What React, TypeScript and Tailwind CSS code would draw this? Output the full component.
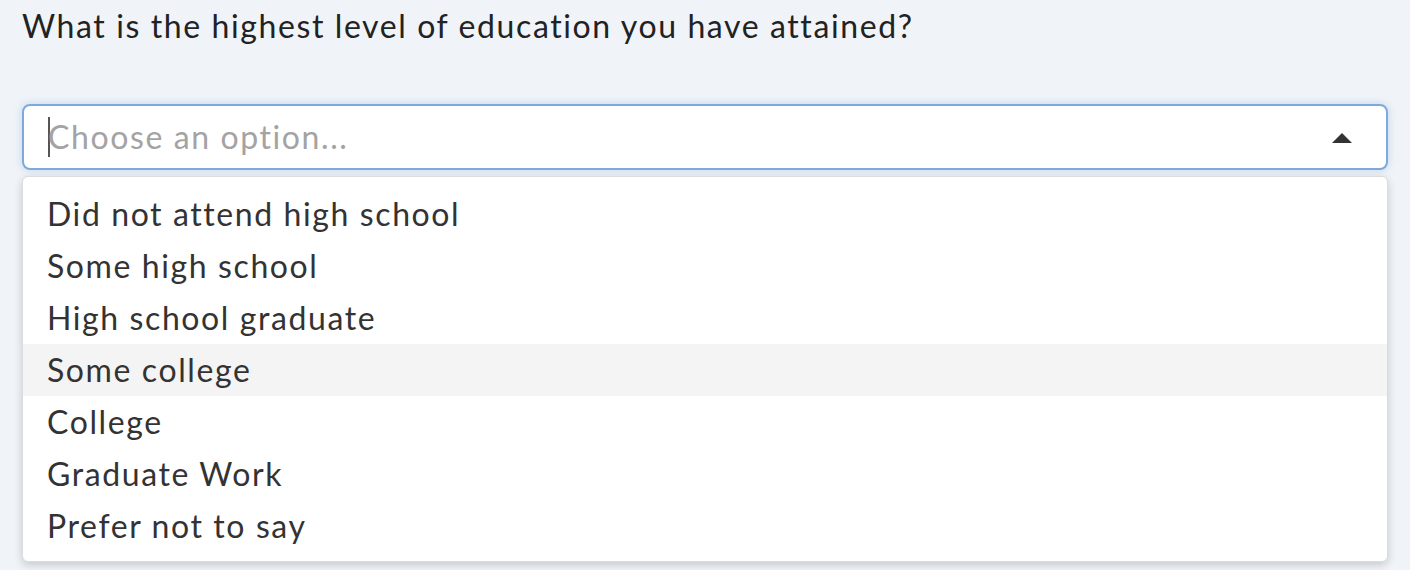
import React from 'react';

const options = [
  'Did not attend high school',
  'Some high school',
  'High school graduate',
  'Some college',
  'College',
  'Graduate Work',
  'Prefer not to say',
];

const App: React.FC = () => {
  return (
    <div className="min-h-[570px] w-full bg-[#f0f4f8] px-[22px] pt-[6px] font-['Lato','Liberation_Sans',sans-serif] text-[#222]">
      <h2 className="text-[32px] leading-[40px] tracking-[1.6px]">
        What is the highest level of education you have attained?
      </h2>

      <div className="mt-[58px]">
        <div className="flex h-[66px] items-center rounded-[8px] border-2 border-[#7fa9db] bg-white pl-[24px] pr-[34px] shadow-[0_0_8px_rgba(102,153,214,0.35)]">
          <span className="mr-[-2px] h-[40px] w-[2px] bg-[#555]" />
          <span className="flex-1 text-[32px] tracking-[1.6px] text-[#a3a3a3]">Choose an option...</span>
          <svg width="20" height="10" viewBox="0 0 20 10" className="mt-[1px]">
            <path d="M0 10 L10 0 L20 10 Z" fill="#333" />
          </svg>
        </div>

        <ul className="mt-[6px] rounded-[6px] border border-[#dcdcdc] bg-white pt-[11px] pb-[9px] shadow-[0_3px_8px_rgba(0,0,0,0.18)]">
          {options.map((o) => (
            <li
              key={o}
              className={`flex h-[52px] items-center px-[24px] text-[32px] tracking-[1.6px] text-[#333] ${o === 'Some college' ? 'bg-[#f4f4f4]' : ''}`}
            >
              {o}
            </li>
          ))}
        </ul>
      </div>
    </div>
  );
};

export default App;
